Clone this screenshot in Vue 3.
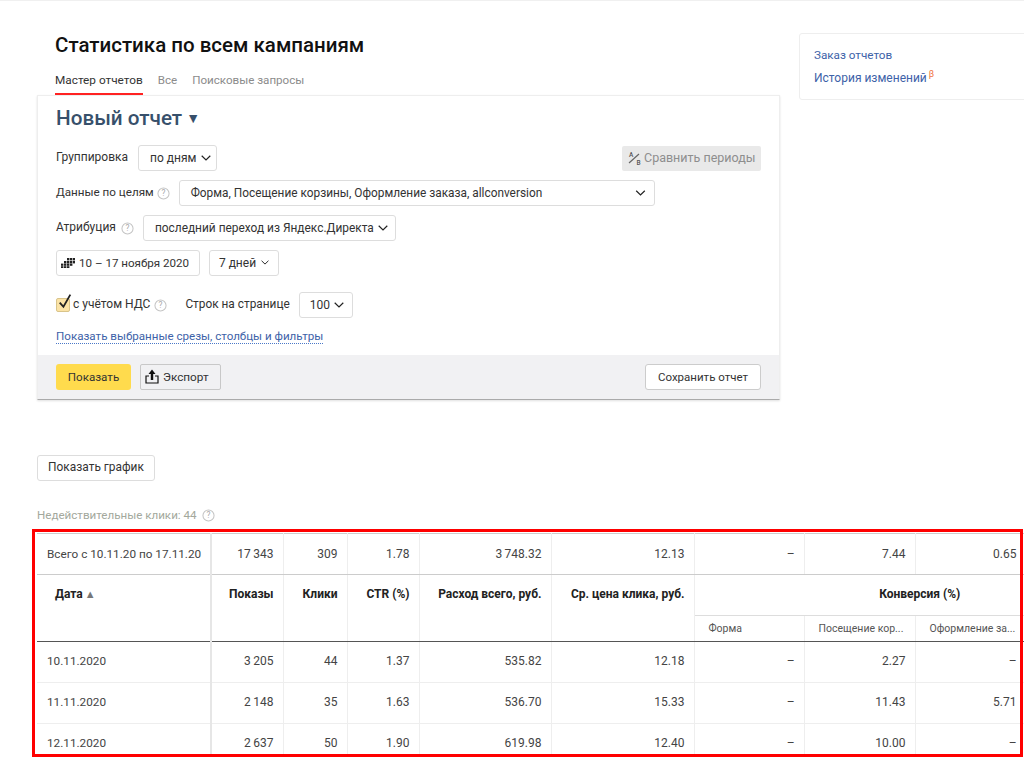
<script setup>
const columns = [174, 72, 64, 72, 132, 143, 110, 111, 111]
const totals = ['Всего с 10.11.20 по 17.11.20', '17\u2009343', '309', '1.78', '3\u2009748.32', '12.13', '–', '7.44', '0.65']
const heads = ['Показы', 'Клики', 'CTR (%)', 'Расход всего, руб.', 'Ср. цена клика, руб.']
const goals = ['Форма', 'Посещение кор...', 'Оформление за...']
const rows = [
  ['10.11.2020', '3\u2009205', '44', '1.37', '535.82', '12.18', '–', '2.27', '–'],
  ['11.11.2020', '2\u2009148', '35', '1.63', '536.70', '15.33', '–', '11.43', '5.71'],
  ['12.11.2020', '2\u2009637', '50', '1.90', '619.98', '12.40', '–', '10.00', '–'],
]
</script>

<template>
  <div class="page">
    <div class="top">
      <main class="main">
        <header class="head">
          <h1 class="title">Статистика по всем кампаниям</h1>
          <nav class="tabs">
            <span class="tab active">Мастер отчетов</span>
            <span class="tab">Все</span>
            <span class="tab">Поисковые запросы</span>
          </nav>
        </header>

        <section class="card">
          <div class="form">
            <h2 class="report">Новый отчет <span class="tri">▼</span></h2>

            <div class="field">
              <span class="label">Группировка</span>
              <span class="btn w1">по дням
                <svg class="chev" viewBox="0 0 10 6"><path d="M.7.8 5 5 9.3.8" /></svg>
              </span>
              <span class="compare">
                <svg class="ab" viewBox="0 0 14 14">
                  <path d="M1 12 11 3" />
                  <text x="1" y="6">A</text>
                  <text x="8.5" y="13.5" class="b">B</text>
                </svg>
                Сравнить периоды
              </span>
            </div>

            <div class="field">
              <span class="label label-goal">Данные по целям</span>
              <svg class="help help-goal" viewBox="0 0 14 14"><circle cx="7" cy="7" r="6" /><text x="7" y="10.2">?</text></svg>
              <span class="btn goals">
                <span>Форма, Посещение корзины, Оформление заказа, allconversion</span>
                <svg class="chev big" viewBox="0 0 10 6"><path d="M.7.8 5 5 9.3.8" /></svg>
              </span>
            </div>

            <div class="field">
              <span class="label">Атрибуция</span>
              <svg class="help help-attr" viewBox="0 0 14 14"><circle cx="7" cy="7" r="6" /><text x="7" y="10.2">?</text></svg>
              <span class="btn attr">последний переход из Яндекс.Директа
                <svg class="chev" viewBox="0 0 10 6"><path d="M.7.8 5 5 9.3.8" /></svg>
              </span>
            </div>

            <div class="field">
              <span class="btn date">
                <svg class="cal" viewBox="0 0 14 10" fill="#222">
                  <rect x="6" y="0" width="2.4" height="2.4" /><rect x="9" y="0" width="2.4" height="2.4" /><rect x="12" y="0" width="2" height="2.4" />
                  <rect x="3" y="3" width="2.4" height="2.4" /><rect x="6" y="3" width="2.4" height="2.4" /><rect x="9" y="3" width="2.4" height="2.4" /><rect x="12" y="3" width="2" height="2.4" />
                  <rect x="0" y="5.6" width="2.4" height="2.2" /><rect x="3" y="5.6" width="2.4" height="2.2" /><rect x="6" y="5.6" width="2.4" height="2.2" /><rect x="9" y="5.6" width="2.4" height="2.2" />
                  <rect x="0" y="8.2" width="2.4" height="1.8" /><rect x="3" y="8.2" width="2.4" height="1.8" /><rect x="6" y="8.2" width="2.4" height="1.8" />
                </svg>
                10 – 17 ноября 2020
              </span>
              <span class="btn days">7 дней
                <svg class="chev small" viewBox="0 0 10 6"><path d="M.7.8 5 5 9.3.8" /></svg>
              </span>
            </div>

            <div class="field vat">
              <span class="check">
                <svg class="tick" viewBox="0 0 14 16"><path d="M2.5 9 6 13 12.5 1.5" /></svg>
              </span>
              <span class="vat-label">с учётом НДС</span>
              <svg class="help help-vat" viewBox="0 0 14 14"><circle cx="7" cy="7" r="6" /><text x="7" y="10.2">?</text></svg>
              <span class="per-page">Строк на странице</span>
              <span class="btn hundred">100
                <svg class="chev" viewBox="0 0 10 6"><path d="M.7.8 5 5 9.3.8" /></svg>
              </span>
            </div>

            <div class="more"><span class="more-link">Показать выбранные срезы, столбцы и фильтры</span></div>
          </div>

          <footer class="actions">
            <span class="show">Показать</span>
            <span class="export">
              <svg class="up" viewBox="0 0 14 15">
                <path d="M7 .5 10.5 5H8.2v6H5.8V5H3.5Z" fill="#111" stroke="none" />
                <path d="M4 7H1v7h12V7h-3" />
              </svg>
              Экспорт
            </span>
            <span class="save">Сохранить отчет</span>
          </footer>
        </section>

        <span class="graph">Показать график</span>
        <div class="invalid">Недействительные клики: 44
          <svg class="help" viewBox="0 0 14 14"><circle cx="7" cy="7" r="6" /><text x="7" y="10.2">?</text></svg>
        </div>
      </main>

      <aside class="side">
        <a class="side-link">Заказ отчетов</a>
        <a class="side-link history">История изменений<sup class="beta">β</sup></a>
      </aside>
    </div>

    <div class="table-area">
      <div class="frame"></div>
      <div class="table-clip">
        <table class="stats">
          <colgroup>
            <col v-for="(w, i) in columns" :key="i" :style="{ width: w + 'px' }" />
          </colgroup>
          <tbody>
            <tr class="totals">
              <td v-for="(v, i) in totals" :key="i" :class="{ first: i === 0 }">{{ v }}</td>
            </tr>
            <tr class="hrow">
              <th rowspan="2" class="date-h">Дата <span class="sort">▲</span></th>
              <th v-for="h in heads" :key="h" rowspan="2" class="num-h">{{ h }}</th>
              <th colspan="3" class="group-h">Конверсия (%)</th>
            </tr>
            <tr class="subrow">
              <th v-for="g in goals" :key="g" class="goal">{{ g }}</th>
            </tr>
            <tr v-for="row in rows" :key="row[0]" class="data">
              <td v-for="(v, i) in row" :key="i" :class="{ first: i === 0 }">{{ v }}</td>
            </tr>
          </tbody>
        </table>
      </div>
    </div>
  </div>
</template>

<style>
html, body { margin: 0; background: #fff; overflow: hidden; }
</style>

<style scoped>
.page {
  width: 1024px;
  height: 758px;
  box-sizing: border-box;
  border-top: 1px solid #f0f0f0;
  overflow: hidden;
  font-family: Roboto, "Noto Sans", sans-serif;
  font-size: 12px;
  color: #333;
  position: relative;
}
.top { display: flex; align-items: flex-start; }
.main { width: 743px; margin-left: 37px; flex: none; }
.head { padding-left: 18px; padding-top: 32px; }
.title { margin: 0; font-size: 20.5px; line-height: 24px; font-weight: 500; color: #111; }
.tabs { display: flex; gap: 15px; margin-top: 13px; height: 25px; }
.tab { color: #8b8b8b; font-size: 11.6px; line-height: 21px; height: 25px; box-sizing: border-box; }
.tab.active { color: #333; font-size: 11.8px; border-bottom: 2px solid #f22; }

.card {
  border: 1px solid #eee;
  border-bottom: 1px solid #aaa;
  box-sizing: border-box;
  height: 305px;
  display: flex;
  flex-direction: column;
  box-shadow: 0 1px 2px rgba(0, 0, 0, .12);
}
.form { flex: 1; padding: 10px 18px 0; }
.report { margin: 0 0 15px; font-size: 20.7px; line-height: 24px; font-weight: 500; color: #37506b; }
.tri { font-size: 14px; vertical-align: 2px; margin-left: -1px; }
.field { display: flex; align-items: center; height: 26px; margin-bottom: 9px; }
.label { color: #333; padding-bottom: 2px; }
.label-goal { font-size: 11.65px; }
.btn {
  display: inline-flex;
  align-items: center;
  justify-content: center;
  box-sizing: border-box;
  height: 26px;
  border: 1px solid #ddd;
  border-radius: 3px;
  background: #fff;
  color: #333;
  white-space: nowrap;
  padding-bottom: 1px;
}
.chev { width: 10px; height: 6px; margin-left: 4px; fill: none; stroke: #222; stroke-width: 1.2; }
.chev.big { width: 11px; }
.chev.small { width: 8px; height: 5px; margin-left: 5px; }
.w1 { width: 79px; margin-left: 10px; justify-content: flex-start; padding-left: 11px; }
.w1 .chev { margin-left: 5px; }
.compare {
  margin-left: auto;
  width: 139px;
  height: 25px;
  box-sizing: border-box;
  background: #e9e9e9;
  border-radius: 2px;
  display: inline-flex;
  align-items: center;
  padding-left: 6px;
  padding-bottom: 1px;
  font-size: 12.5px;
  color: #8e8e8e;
  white-space: nowrap;
}
.ab { width: 14px; height: 14px; margin-right: 2px; fill: #555; stroke: none; }
.ab path { stroke: #666; stroke-width: 1.2; fill: none; }
.ab text { font-size: 6.5px; font-family: Roboto, sans-serif; font-weight: 500; }
.help { width: 13px; height: 13px; flex: none; margin-left: 3px; }
.help-goal { margin-left: 3px; }
.help-attr { margin-left: 5px; }
.help-vat { margin-left: 4px; }
.help circle { fill: none; stroke: #c4c4c4; stroke-width: 1.1; }
.help text { font-size: 9px; text-anchor: middle; fill: #aaa; font-family: Roboto, sans-serif; }
.goals { width: 476px; margin-left: 9px; justify-content: space-between; padding: 0 8px 1px 11px; font-size: 11.85px; }
.attr { width: 253px; margin-left: 9px; justify-content: flex-start; padding-left: 11px; font-size: 11.9px; }
.date { width: 144px; justify-content: flex-start; padding-left: 4px; font-size: 11.6px; }
.cal { width: 14px; height: 10px; margin-right: 4px; }
.days { width: 70px; margin-left: 9px; }
.vat { margin-top: 16px; margin-bottom: 10px; }
.check {
  position: relative;
  width: 14px;
  height: 14px;
  box-sizing: border-box;
  background: #fbe3a6;
  border: 1px solid #d9c48a;
  border-radius: 2px;
  flex: none;
}
.tick {
  position: absolute;
  left: 0;
  top: -6px;
  width: 15px;
  height: 17px;
  fill: none;
  stroke: #222;
  stroke-width: 1.7;
}
.vat-label { margin-left: 3px; padding-bottom: 2px; }
.per-page { margin-left: 18px; padding-bottom: 2px; font-size: 11.85px; }
.hundred { width: 54px; margin-left: 9px; justify-content: flex-start; padding-left: 10px; }
.more { line-height: 18px; margin-top: -1px; }
.more-link { color: #3d62a8; font-size: 11.6px; border-bottom: 1px dotted #4a78c8; line-height: 14px; display: inline-block; }

.actions {
  background: #f1f1f3;
  height: 44px;
  flex: none;
  box-sizing: border-box;
  padding: 9px 18px 0;
  display: flex;
  align-items: flex-start;
}
.show {
  width: 75px;
  height: 26px;
  background: #ffdb4d;
  border-radius: 3px;
  display: flex;
  align-items: center;
  justify-content: center;
  font-size: 11.6px;
  padding-bottom: 1px;
  box-sizing: border-box;
  color: #333;
}
.export {
  margin-left: 9px;
  width: 81px;
  height: 26px;
  box-sizing: border-box;
  border: 1px solid #c8c8c8;
  border-radius: 2px;
  display: flex;
  align-items: center;
  padding-left: 4px;
  padding-bottom: 1px;
  font-size: 11.75px;
  color: #333;
}
.up { width: 14px; height: 15px; margin-right: 4px; fill: none; stroke: #111; stroke-width: 1.2; }
.save {
  margin-left: auto;
  width: 116px;
  height: 26px;
  box-sizing: border-box;
  background: #fff;
  border: 1px solid #ccc;
  border-radius: 3px;
  display: flex;
  align-items: center;
  justify-content: center;
  font-size: 11.5px;
  padding-bottom: 1px;
}

.graph {
  display: flex;
  width: 118px;
  height: 26px;
  margin-top: 55px;
  box-sizing: border-box;
  border: 1px solid #ddd;
  border-radius: 3px;
  align-items: center;
  justify-content: center;
  font-size: 11.9px;
  padding-bottom: 2px;
}
.invalid {
  margin-top: 26px;
  height: 16px;
  line-height: 16px;
  font-size: 11.6px;
  color: #a3a89c;
  display: flex;
  align-items: center;
}
.invalid .help { margin-left: 5px; }

.side {
  margin: 32px 0 0 19px;
  width: 260px;
  height: 67px;
  flex: none;
  box-sizing: border-box;
  border: 1px solid #eee;
  border-radius: 3px;
  padding: 13px 14px;
  display: flex;
  flex-direction: column;
  gap: 6px;
}
.side-link { color: #3d62a8; font-size: 11.7px; line-height: 17px; }
.history { font-size: 12px; }
.beta { color: #f0713a; font-size: 9px; line-height: 0; margin-left: 2px; }

.table-area { position: relative; margin: 10px 0 0 37px; width: 987px; }
.frame {
  position: absolute;
  left: -5px;
  top: -4px;
  right: 1px;
  height: 228px;
  box-sizing: border-box;
  border: 3px solid #f00;
  z-index: 1;
  pointer-events: none;
}
.table-clip { overflow: hidden; height: 223px; }
.stats { border-collapse: collapse; table-layout: fixed; width: 989px; color: #444; }
.stats td, .stats th { padding: 0 9px; box-sizing: border-box; border-right: 1px solid #eee; text-align: right; }
.totals td { height: 41px; border-top: 1px solid #ccc; border-bottom: 1px solid #ccc; padding-bottom: 1px; }
.stats td.first { text-align: left; white-space: nowrap; padding-left: 10px; font-size: 11.75px; }
.stats td:first-child, .stats th.date-h { border-right: 2px solid #e6e6e6; }
.hrow th { height: 41px; font-weight: 700; color: #222; vertical-align: top; padding-top: 12px; line-height: 14px; white-space: nowrap; }
.stats .date-h { text-align: left; padding-left: 18px; border-bottom: 1px solid #555; }
.stats .num-h { border-bottom: 1px solid #555; }
.sort { font-size: 11px; color: #777; margin-left: -1px; }
.stats .group-h { text-align: center; padding-left: 128px; border-bottom: 1px solid #ddd; border-right: 0; }
.subrow th { height: 26px; border-bottom: 1px solid #555; font-weight: 400; }
.stats .goal { text-align: left; padding: 0 4px 0 14px; font-size: 10.5px; color: #555; white-space: nowrap; }
.data td { height: 41px; border-bottom: 1px solid #eee; padding-bottom: 3px; }
</style>
